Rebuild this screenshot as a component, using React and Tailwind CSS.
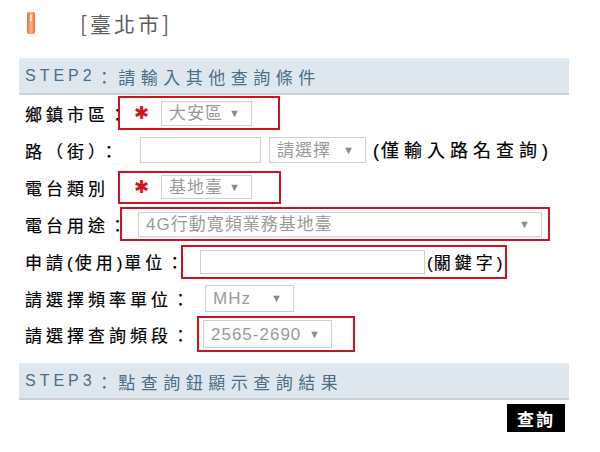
const CJK = '"Noto Sans CJK TC", "Noto Sans", sans-serif'
const LAT = '"Liberation Sans", "Noto Sans CJK TC", sans-serif'

function Label({ w, children }) {
  return (
    <span
      className="shrink-0 whitespace-nowrap text-[17px] font-normal tracking-[4px] text-black leading-none [-webkit-text-stroke:0.2px_#000]"
      style={{ width: w, fontFamily: CJK }}>
      {children}
    </span>
  )
}

function Sel({ w, h = 25, text }) {
  return (
    <div
      className="shrink-0 flex items-center justify-between border border-[#cfcfcf] bg-white px-[7px] text-[17px] tracking-[1px] text-[#9a9a9a] leading-none"
      style={{ width: w, height: h, fontFamily: LAT }}>
      <span className="whitespace-nowrap">{text}</span>
      <span className="text-[11px] text-[#8a8a8a] pr-[3px]">▼</span>
    </div>
  )
}

function Box({ w, h = 34, className = '', children }) {
  return (
    <div
      className={`shrink-0 flex items-center border-2 border-[#c8141e] ${className}`}
      style={{ width: w, height: h }}>
      {children}
    </div>
  )
}

function Star() {
  return (
    <span className="ml-[14px] mr-[12px] w-[15px] text-[18px] text-[#d2141c] leading-none" style={{ fontFamily: '"DejaVu Sans", sans-serif' }}>
      ✱
    </span>
  )
}

function Bar({ step, text }) {
  return (
    <div className="h-[37px] flex items-center bg-[#dee7ee] border-t border-[#e8eef2] border-b-2 border-b-[#c9d1d7] pl-[6px] text-[#4a6f86] leading-none">
      <span className="text-[16px] tracking-[4px]" style={{ fontFamily: LAT }}>{step}</span>
      <span className="text-[17px] tracking-[5.5px]" style={{ fontFamily: CJK }}>：{text}</span>
    </div>
  )
}

export default function App() {
  return (
    <div className="w-[600px] h-[452px] bg-white overflow-hidden">
      <div className="ml-[19px] w-[550px]">
        {/* title */}
        <div className="h-[58px] flex items-start pt-[12px]">
          <div className="ml-[8px] w-[8px] h-[22px] rounded-[2px] bg-gradient-to-r from-[#e86a2a] via-[#f6b48a] to-[#e86a2a] flex justify-center pt-[3px]">
            <div className="w-[2px] h-[6px] bg-[#fde3d2]" />
          </div>
          <span className="ml-[45px] text-[21px] tracking-[3px] text-[#5e5e5e] leading-[22px]" style={{ fontFamily: CJK }}>[臺北市]</span>
        </div>

        <Bar step="STEP2" text="請輸入其他查詢條件" />

        <div className="pl-[6px]">
          {/* 鄉鎮市區 */}
          <div className="h-[36px] flex items-center">
            <Label w={93}>鄉鎮市區：</Label>
            <Box w={162} h={34}>
              <Star />
              <Sel w={91} h={25} text="大安區" />
            </Box>
          </div>

          {/* 路（街） */}
          <div className="h-[38px] flex items-center">
            <Label w={115}>路（街）：</Label>
            <div className="shrink-0 w-[121px] h-[26px] border border-[#cfcfcf]" />
            <div className="ml-[8px]"><Sel w={97} h={26} text="請選擇" /></div>
            <span className="ml-[7px] whitespace-nowrap text-[18px] tracking-[5px] text-black leading-none [-webkit-text-stroke:0.2px_#000]" style={{ fontFamily: CJK }}>
              <span className="tracking-[2px]" style={{ fontFamily: LAT }}>(</span>僅輸入路名查詢<span style={{ fontFamily: LAT }}>)</span>
            </span>
          </div>

          {/* 電台類別 */}
          <div className="h-[36px] flex items-center">
            <Label w={93}>電台類別</Label>
            <Box w={163} h={33}>
              <Star />
              <Sel w={91} h={24} text="基地臺" />
            </Box>
          </div>

          {/* 電台用途 */}
          <div className="h-[38px] flex items-center">
            <Label w={95}>電台用途：</Label>
            <Box w={430} h={34} className="pl-[16px]">
              <Sel w={404} h={25} text="4G行動寬頻業務基地臺" />
            </Box>
          </div>

          {/* 申請(使用)單位 */}
          <div className="h-[38px] flex items-center">
            <Label w={156}>
              申請<span style={{ fontFamily: LAT }} className="tracking-[2px]">(</span>使用<span style={{ fontFamily: LAT }} className="tracking-[2px]">)</span>單位：
            </Label>
            <Box w={326} h={34} className="pl-[17px]">
              <div className="shrink-0 w-[225px] h-[24px] border border-[#cfcfcf]" />
              <span className="ml-[2px] whitespace-nowrap text-[17px] tracking-[4px] text-black leading-none [-webkit-text-stroke:0.2px_#000]" style={{ fontFamily: CJK }}>
                <span style={{ fontFamily: LAT }} className="tracking-[1px]">(</span>關鍵字<span style={{ fontFamily: LAT }}>)</span>
              </span>
            </Box>
          </div>

          {/* 頻率單位 */}
          <div className="h-[34px] flex items-center">
            <Label w={180}>請選擇頻率單位：</Label>
            <Sel w={89} h={27} text="MHz" />
          </div>

          {/* 查詢頻段 */}
          <div className="h-[38px] flex items-center">
            <Label w={172}>請選擇查詢頻段：</Label>
            <Box w={158} h={36} className="pl-[4px]">
              <Sel w={129} h={28} text="2565-2690" />
            </Box>
          </div>
        </div>

        <div className="mt-[10px]">
          <Bar step="STEP3" text="點查詢鈕顯示查詢結果" />
        </div>

        <div className="mt-[4px] flex justify-end pr-[4px]">
          <button
            className="w-[58px] h-[28px] bg-black text-white text-[17px] font-bold tracking-[2px] leading-none"
            style={{ fontFamily: CJK }}>
            查詢
          </button>
        </div>
      </div>
    </div>
  )
}
